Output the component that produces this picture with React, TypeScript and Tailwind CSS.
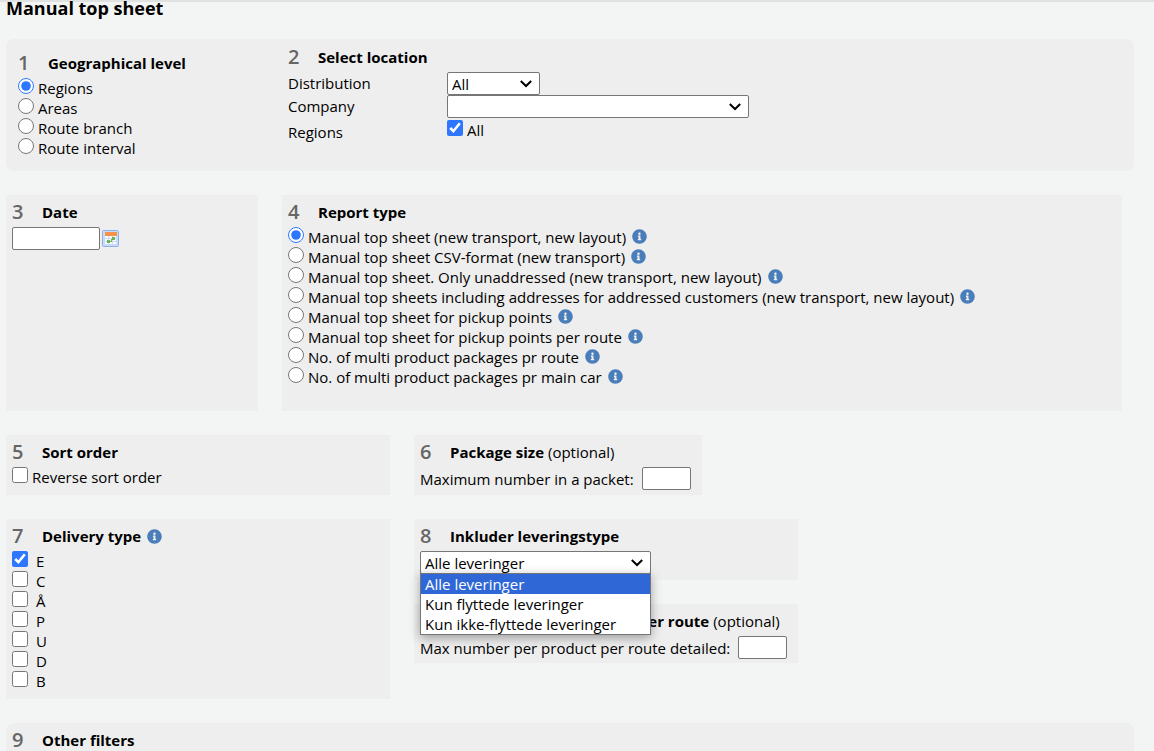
import React from "react";
import { FaInfoCircle } from "react-icons/fa";

const levels = ["Regions", "Areas", "Route branch", "Route interval"];

const reportTypes = [
  "Manual top sheet (new transport, new layout)",
  "Manual top sheet CSV-format (new transport)",
  "Manual top sheet. Only unaddressed (new transport, new layout)",
  "Manual top sheets including addresses for addressed customers (new transport, new layout)",
  "Manual top sheet for pickup points",
  "Manual top sheet for pickup points per route",
  "No. of multi product packages pr route",
  "No. of multi product packages pr main car",
];

const deliveryTypes = ["E", "C", "Å", "P", "U", "D", "B"];

const leveringer = [
  "Alle leveringer",
  "Kun flyttede leveringer",
  "Kun ikke-flyttede leveringer",
];

const Info: React.FC = () => (
  <FaInfoCircle className="size-[15px] shrink-0 text-[#4a7ebb]" />
);

const Heading: React.FC<{
  no?: string;
  title: string;
  note?: string;
  children?: React.ReactNode;
}> = ({ no, title, note, children }) => (
  <div className="mb-1 flex h-[22px] items-center whitespace-nowrap">
    <span className="w-[30px] shrink-0 text-[20px] font-semibold text-[#666]">
      {no}
    </span>
    <h2 className="font-bold">{title}</h2>
    {note && <span className="ml-1">{note}</span>}
    {children}
  </div>
);

const Select: React.FC<{
  id: string;
  options: string[];
  className: string;
  label?: string;
}> = ({ id, options, className, label }) => (
  <div className={`relative ${className}`}>
    <select
      id={id}
      aria-label={label}
      className="block h-[23px] w-full appearance-none rounded-[2px] border border-[#767676] bg-white pl-1 leading-5"
    >
      {options.map((o) => (
        <option key={o}>{o}</option>
      ))}
    </select>
    <svg
      className="pointer-events-none absolute top-2 right-2 h-2 w-3"
      viewBox="0 0 12 8"
      fill="none"
      stroke="#000"
      strokeWidth="2"
    >
      <path d="M0.8 1 L6 6 L11.2 1" />
    </svg>
  </div>
);

const textBox =
  "h-[23px] rounded-[2px] border border-[#767676] bg-white px-1 outline-none";
const tick = "size-4 shrink-0 accent-[#2f76ff]";

const CalendarIcon: React.FC = () => (
  <svg className="size-[17px]" viewBox="0 0 17 17">
    <rect x="0.5" y="0.5" width="16" height="16" rx="1" fill="#c9dbf7" stroke="#8fb0e6" />
    <rect x="3" y="3" width="11" height="11" fill="#f7faff" />
    <rect x="3" y="2" width="12" height="4" fill="#f79248" />
    <path d="M3 8.5h11M3 11.5h11M6.5 6v8M10.5 6v8" stroke="#cfdcf0" />
    <rect x="10" y="7" width="3" height="3" fill="#6cb356" />
    <rect x="5" y="10" width="3" height="3" fill="#6cb356" />
    <rect x="8" y="11" width="2" height="1" fill="#6cb356" />
    <rect x="9" y="9" width="1" height="2" fill="#6cb356" />
  </svg>
);

const App: React.FC = () => {
  return (
    <main className="min-h-screen border-t-2 border-[#e0e2e1] bg-[#f3f5f4] pr-5 pl-[6px] font-['Open_Sans',sans-serif] text-[15px] leading-5 text-black">
      <h1 className="h-[37px] text-[18px] leading-3 font-bold">
        Manual top sheet
      </h1>

      <div className="flex flex-col gap-6">
        <section className="flex h-33 rounded-lg bg-[#eee]">
          <div className="w-[282px] shrink-0 pt-[13px] pl-3">
            <Heading no="1" title="Geographical level" />
            {levels.map((level, i) => (
              <label key={level} className="flex items-start gap-1">
                <input type="radio" name="level" defaultChecked={i === 0} className={tick} />
                {level}
              </label>
            ))}
          </div>
          <div className="pt-[7px]">
            <Heading no="2" title="Select location" />
            <div className="grid grid-cols-[159px_302px]">
              <label htmlFor="distribution" className="leading-[23px]">
                Distribution
              </label>
              <Select id="distribution" options={["All"]} className="w-[93px]" />
              <label htmlFor="company" className="leading-[23px]">
                Company
              </label>
              <Select id="company" options={[""]} className="w-full" />
              <span className="pt-1">Regions</span>
              <label className="flex items-start gap-1 pt-[2px]">
                <input type="checkbox" defaultChecked className={tick} />
                All
              </label>
            </div>
          </div>
        </section>

        <div className="flex gap-6">
          <section className="w-63 shrink-0 bg-[#eee] p-[6px]">
            <Heading no="3" title="Date" />
            <div className="flex items-center gap-[2px]">
              <input type="text" aria-label="Date" className={`w-[88px] ${textBox}`} />
              <button type="button" aria-label="Pick date">
                <CalendarIcon />
              </button>
            </div>
          </section>
          <section className="w-210 bg-[#eee] px-[6px] pt-[6px] pb-6">
            <Heading no="4" title="Report type" />
            {reportTypes.map((type, i) => (
              <label key={type} className="flex items-start gap-1 whitespace-nowrap">
                <input type="radio" name="report" defaultChecked={i === 0} className={tick} />
                {type}
                <span className="pt-[2px] pl-[2px]">
                  <Info />
                </span>
              </label>
            ))}
          </section>
        </div>

        <div className="flex gap-6">
          <section className="w-96 bg-[#eee] px-[6px] pt-[6px] pb-2">
            <Heading no="5" title="Sort order" />
            <label className="flex items-start gap-1">
              <input type="checkbox" className={tick} />
              Reverse sort order
            </label>
          </section>
          <section className="w-72 bg-[#eee] px-[6px] pt-[6px]">
            <Heading no="6" title="Package size" note="(optional)" />
            <label className="flex items-center gap-2 whitespace-nowrap">
              Maximum number in a packet:
              <input type="text" className={`w-[49px] ${textBox}`} />
            </label>
          </section>
        </div>

        <div className="flex items-start gap-6">
          <section className="w-96 bg-[#eee] px-[6px] pt-[6px] pb-2">
            <Heading no="7" title="Delivery type">
              <span className="pl-[6px]">
                <Info />
              </span>
            </Heading>
            {deliveryTypes.map((type, i) => (
              <label key={type} className="flex items-start gap-2">
                <input type="checkbox" defaultChecked={i === 0} className={tick} />
                {type}
              </label>
            ))}
          </section>
          <div className="flex w-96 flex-col gap-6">
            <section className="bg-[#eee] p-[6px]">
              <Heading no="8" title="Inkluder leveringstype" />
              <div className="relative w-[231px]">
                <Select
                  id="leveringstype"
                  label="Inkluder leveringstype"
                  options={leveringer}
                  className="w-full"
                />
                <ul className="absolute top-[22px] left-0 z-10 w-full border border-[#767676] bg-white shadow-[0_3px_10px_rgba(0,0,0,0.35)]">
                  {leveringer.map((o, i) => (
                    <li
                      key={o}
                      className={i === 0 ? "bg-[#2f68d6] pl-1 text-white" : "pl-1"}
                    >
                      {o}
                    </li>
                  ))}
                </ul>
              </div>
            </section>
            <section className="bg-[#eee] px-[6px] pt-[6px] pb-1">
              <Heading title="Max number of products per route" note="(optional)" />
              <label className="flex items-center gap-2 whitespace-nowrap">
                Max number per product per route detailed:
                <input type="text" className={`w-[49px] ${textBox}`} />
              </label>
            </section>
          </div>
        </div>

        <section className="rounded-t-lg bg-[#eee] px-[6px] pt-[6px]">
          <Heading no="9" title="Other filters" />
        </section>
      </div>
    </main>
  );
};

export default App;
